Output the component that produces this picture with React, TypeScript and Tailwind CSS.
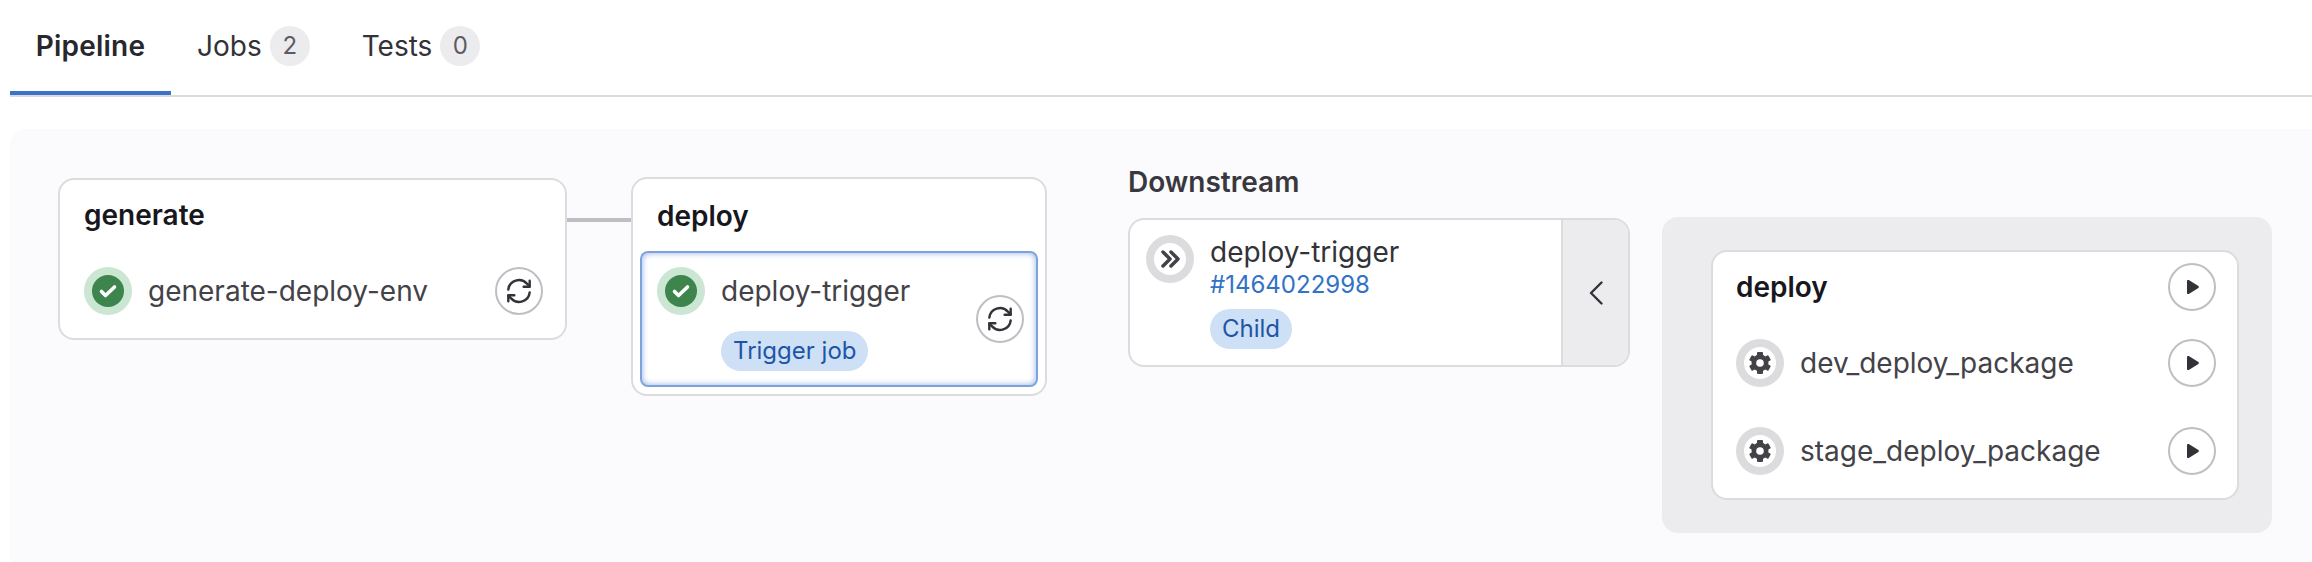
const FONT = "font-['Inter',_'Noto_Sans',_sans-serif]";

function SuccessIcon() {
  return (
    <svg width="48" height="48" viewBox="0 0 48 48" className="shrink-0">
      <circle cx="24" cy="24" r="24" fill="#cbe6d2" />
      <circle cx="24" cy="24" r="16" fill="#3d854d" />
      <path d="M17.5 24.5l4 4 9-8.5" fill="none" stroke="#ffffff" strokeWidth="3.6" strokeLinecap="round" strokeLinejoin="round" />
    </svg>
  );
}

function ManualIcon() {
  return (
    <svg width="48" height="48" viewBox="0 0 48 48" className="shrink-0">
      <circle cx="24" cy="24" r="24" fill="#dcdcde" />
      <circle cx="24" cy="24" r="16" fill="#ffffff" />
      <g fill="#434248">
        <circle cx="24" cy="24" r="8.5" />
        {[0, 60, 120, 180, 240, 300].map((deg) => (
          <rect key={deg} x="21" y="13" width="6" height="5" rx="1" transform={`rotate(${deg} 24 24)`} />
        ))}
      </g>
      <circle cx="24" cy="24" r="3.8" fill="#ffffff" />
    </svg>
  );
}

function TriggerIcon() {
  return (
    <svg width="48" height="48" viewBox="0 0 48 48" className="shrink-0">
      <circle cx="24" cy="24" r="24" fill="#dcdcde" />
      <circle cx="24" cy="24" r="16" fill="#ffffff" />
      <path d="M17 17l7 7-7 7M25 17l7 7-7 7" fill="none" stroke="#434248" strokeWidth="3.5" strokeLinecap="round" strokeLinejoin="round" />
    </svg>
  );
}

function RoundButton({ children }: { children: React.ReactNode }) {
  return (
    <div className="flex h-12 w-12 shrink-0 items-center justify-center rounded-full border-2 border-[#bfbfc3] bg-white">
      {children}
    </div>
  );
}

function RetryButton() {
  return (
    <RoundButton>
      <svg width="26" height="26" viewBox="0 0 28 28" fill="none" stroke="#333238" strokeWidth="2.6" strokeLinecap="round" strokeLinejoin="round">
        <path d="M2.5 12.5A11.5 11.5 0 0 1 22.5 6l3 3" />
        <path d="M25.5 3v6.5H19" />
        <path d="M25.5 15.5A11.5 11.5 0 0 1 5.5 22l-3-3" />
        <path d="M2.5 25v-6.5H9" />
      </svg>
    </RoundButton>
  );
}

function PlayButton() {
  return (
    <RoundButton>
      <svg width="14" height="16" viewBox="0 0 14 18" preserveAspectRatio="none" className="ml-0.5">
        <path d="M1 2.2c0-1 1-1.5 1.8-1l9.6 6.8c.7.5.7 1.5 0 2l-9.6 6.8c-.8.5-1.8 0-1.8-1z" fill="#333238" />
      </svg>
    </RoundButton>
  );
}

function Badge({ label }: { label: string }) {
  return (
    <span className="inline-flex h-10 items-center rounded-full bg-[#cde0f6] px-3 text-[24px] text-[#1f55a5]">
      {label}
    </span>
  );
}

export default function App() {
  return (
    <div className={`${FONT} h-[562px] w-[2312px] overflow-hidden bg-white text-[#434248]`}>
      {/* Tabs */}
      <div className="ml-[10px] flex h-[97px] border-b-2 border-[#dcdcde] text-[28px]">
        <div className="flex h-[95px] w-[161px] items-center justify-center border-b-4 border-[#3c72c8] font-semibold tracking-[0.2px] text-[#28272d]">
          Pipeline
        </div>
        <div className="ml-[26px] flex items-center gap-2 pb-1 text-[#333238]">
          Jobs
          <span className="flex h-10 w-10 items-center justify-center rounded-full bg-[#ececef] text-[24px] text-[#5c5b62]">2</span>
        </div>
        <div className="ml-[52px] flex items-center gap-2 pb-1 text-[#333238]">
          Tests
          <span className="flex h-10 w-10 items-center justify-center rounded-full bg-[#ececef] text-[24px] text-[#5c5b62]">0</span>
        </div>
      </div>

      {/* Pipeline graph */}
      <div className="ml-[10px] mt-8 flex h-[433px] items-start rounded-tl-2xl bg-[#fbfbfd] pl-[48px] pt-[48px]">
        {/* generate stage */}
        <div className="mt-px flex h-[162px] w-[509px] shrink-0 flex-col rounded-2xl border-2 border-[#dcdcde] bg-white pl-6 pr-[22px]">
          <div className="mt-[17px] text-[28px] font-semibold leading-9 text-[#18171d]">generate</div>
          <div className="mt-[34px] flex items-center">
            <SuccessIcon />
            <span className="ml-4 flex-1 text-[28px]">generate-deploy-env</span>
            <RetryButton />
          </div>
        </div>

        <div className="mt-[41px] h-1 w-[64px] shrink-0 bg-[#bfbfc3]" />

        {/* deploy stage */}
        <div className="flex h-[219px] w-[416px] shrink-0 flex-col rounded-2xl border-2 border-[#dcdcde] bg-white p-[7px]">
          <div className="ml-[17px] mt-3 text-[28px] font-semibold leading-9 text-[#18171d]">deploy</div>
          <div className="mt-[17px] flex h-[136px] items-center rounded-lg border-2 border-[#7ea3dc] pl-[15px] pr-3 shadow-[inset_0_0_6px_#8fb0e4]">
            <div className="flex flex-1 flex-col">
              <div className="flex items-center">
                <SuccessIcon />
                <span className="ml-4 text-[28px]">deploy-trigger</span>
              </div>
              <div className="ml-16 mt-4 flex">
                <Badge label="Trigger job" />
              </div>
            </div>
            <RetryButton />
          </div>
        </div>

        {/* Downstream */}
        <div className="ml-[81px] w-[502px] shrink-0 self-start">
          <div className="-mt-[13px] text-[28px] font-semibold leading-9 text-[#3a383f]">Downstream</div>
          <div className="mt-[18px] flex h-[149px] overflow-hidden rounded-2xl border-2 border-[#dcdcde] bg-white">
            <div className="flex flex-1 pl-4 pt-[15px]">
              <TriggerIcon />
              <div className="ml-4 flex flex-col items-start">
                <span className="text-[28px] leading-[34px] text-[#333238]">deploy-trigger</span>
                <span className="text-[24px] leading-8 text-[#3272c8]">#1464022998</span>
                <div className="mt-2 flex"><Badge label="Child" /></div>
              </div>
            </div>
            <div className="flex w-[67px] items-center justify-center border-l-2 border-[#dcdcde] bg-[#ececef]">
              <svg width="14" height="24" viewBox="0 0 14 24" fill="none" stroke="#333238" strokeWidth="2.4" strokeLinecap="round" strokeLinejoin="round">
                <path d="M12.5 1.5L2 12l10.5 10.5" />
              </svg>
            </div>
          </div>
        </div>

        {/* Expanded downstream pipeline */}
        <div className="ml-[32px] mt-[40px] w-[610px] shrink-0 rounded-2xl bg-[#ececef] pb-[33px] pl-[49px] pr-[33px] pt-[33px]">
          <div className="flex h-[250px] flex-col rounded-2xl border-2 border-[#dcdcde] bg-white pl-[23px] pr-[21px] pt-[11px]">
            <div className="flex items-center justify-between">
              <span className="text-[28px] font-semibold text-[#18171d]">deploy</span>
              <PlayButton />
            </div>
            <div className="mt-[28px] flex items-center">
              <ManualIcon />
              <span className="ml-4 flex-1 text-[28px]">dev_deploy_package</span>
              <PlayButton />
            </div>
            <div className="mt-[40px] flex items-center">
              <ManualIcon />
              <span className="ml-4 flex-1 text-[28px]">stage_deploy_package</span>
              <PlayButton />
            </div>
          </div>
        </div>
      </div>
    </div>
  );
}
